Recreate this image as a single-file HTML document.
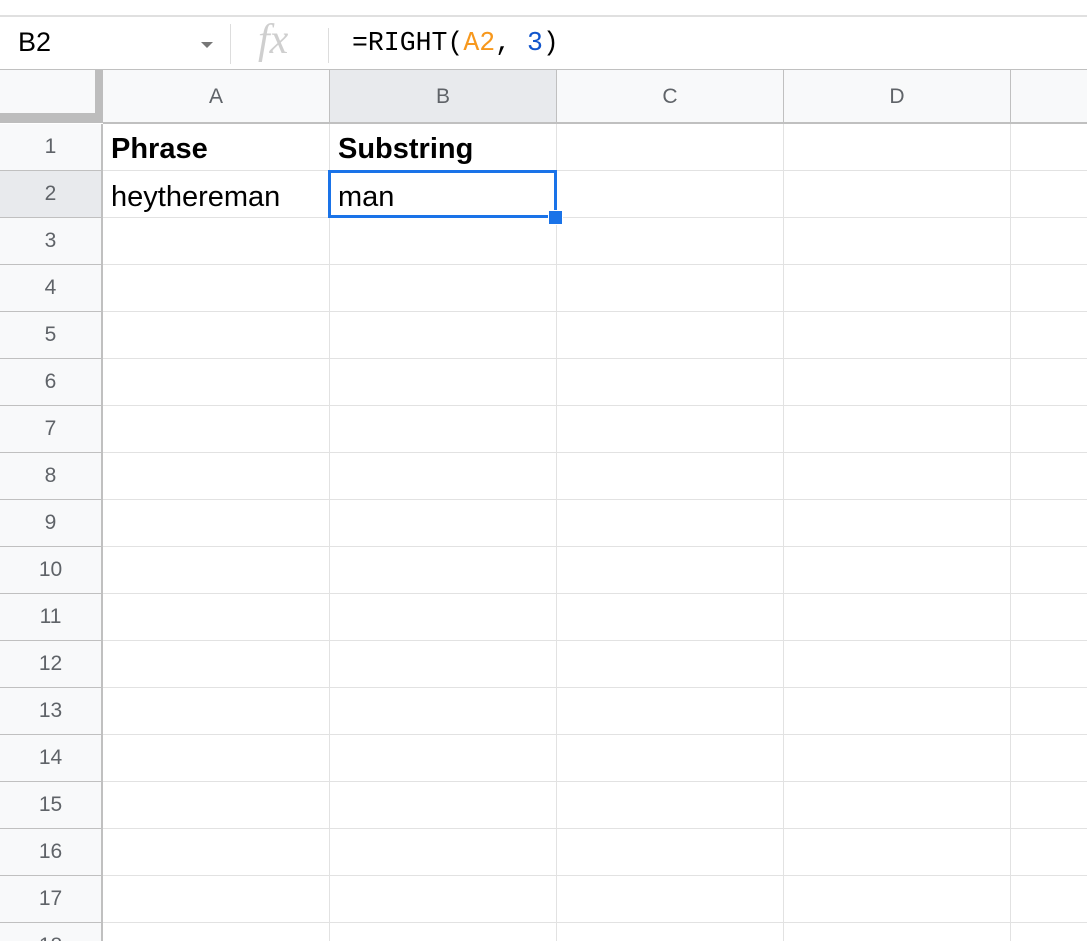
<!DOCTYPE html>
<html><head><style>
html,body{margin:0;width:1087px;height:941px;overflow:hidden}
body{background:#fff;font-family:"Liberation Sans",Arial,sans-serif;position:relative}
.a{position:absolute}
.h{background:#f8f9fa}
.ch{position:absolute;top:70px;height:53px;line-height:53px;text-align:center;color:#5f6368;font-size:21px;background:#f8f9fa;border-right:1px solid #c0c0c0}
.rh{position:absolute;left:0;width:103px;text-align:center;color:#5f6368;font-size:21px;background:#f8f9fa;border-bottom:1px solid #c0c0c0;border-right:2px solid #c0c0c0;box-sizing:border-box}
.hl{position:absolute;left:103px;right:0;height:1px;background:#e2e2e2}
.vl{position:absolute;top:124px;bottom:0;width:1px;background:#e2e2e2}
.t{position:absolute;font-size:29px;color:#000}
</style></head><body>
<div class="a" style="left:0;right:0;top:15px;height:2px;background:#e0e0e0"></div>
<div class="a" style="left:18px;top:27px;font-size:27px;color:#000">B2</div>
<div class="a" style="left:201px;top:42px;width:0;height:0;border-left:6px solid transparent;border-right:6px solid transparent;border-top:6px solid #777"></div>
<div class="a" style="left:230px;top:24px;width:1px;height:40px;background:#ddd"></div>
<div class="a" style="left:258px;top:16px;font-family:'Liberation Serif',serif;font-style:italic;font-size:42px;color:#cfcfcf">fx</div>
<div class="a" style="left:328px;top:28px;width:1px;height:35px;background:#ddd"></div>
<div class="a" style="left:352px;top:28px;font-family:'Liberation Mono',monospace;font-size:26.5px;color:#000">=RIGHT(<span style="color:#f7981d">A2</span>, <span style="color:#1155cc">3</span>)</div>
<div class="a" style="left:0;right:0;top:69px;height:1px;background:#c0c0c0"></div>
<div class="a h" style="left:0;top:70px;width:103px;height:53px"></div>
<div class="a" style="left:95px;top:70px;width:8px;height:53px;background:#bdbdbd"></div>
<div class="a" style="left:0;top:113px;width:103px;height:10px;background:#bdbdbd"></div>
<div class="ch" style="left:103px;width:226px">A</div>
<div class="ch" style="left:330px;width:226px;background:#e8eaed">B</div>
<div class="ch" style="left:557px;width:226px">C</div>
<div class="ch" style="left:784px;width:226px">D</div>
<div class="ch" style="left:1011px;width:80px"></div>
<div class="a" style="left:103px;right:0;top:122px;height:2px;background:#c0c0c0"></div>
<div class="rh" style="top:124px;height:47px;line-height:46px">1</div>
<div class="rh" style="top:171px;height:47px;line-height:46px;background:#e8eaed">2</div>
<div class="rh" style="top:218px;height:47px;line-height:46px">3</div>
<div class="rh" style="top:265px;height:47px;line-height:46px">4</div>
<div class="rh" style="top:312px;height:47px;line-height:46px">5</div>
<div class="rh" style="top:359px;height:47px;line-height:46px">6</div>
<div class="rh" style="top:406px;height:47px;line-height:46px">7</div>
<div class="rh" style="top:453px;height:47px;line-height:46px">8</div>
<div class="rh" style="top:500px;height:47px;line-height:46px">9</div>
<div class="rh" style="top:547px;height:47px;line-height:46px">10</div>
<div class="rh" style="top:594px;height:47px;line-height:46px">11</div>
<div class="rh" style="top:641px;height:47px;line-height:46px">12</div>
<div class="rh" style="top:688px;height:47px;line-height:46px">13</div>
<div class="rh" style="top:735px;height:47px;line-height:46px">14</div>
<div class="rh" style="top:782px;height:47px;line-height:46px">15</div>
<div class="rh" style="top:829px;height:47px;line-height:46px">16</div>
<div class="rh" style="top:876px;height:47px;line-height:46px">17</div>
<div class="rh" style="top:923px;height:47px;line-height:46px">18</div>
<div class="hl" style="top:170px"></div><div class="hl" style="top:217px"></div><div class="hl" style="top:264px"></div><div class="hl" style="top:311px"></div><div class="hl" style="top:358px"></div><div class="hl" style="top:405px"></div><div class="hl" style="top:452px"></div><div class="hl" style="top:499px"></div><div class="hl" style="top:546px"></div><div class="hl" style="top:593px"></div><div class="hl" style="top:640px"></div><div class="hl" style="top:687px"></div><div class="hl" style="top:734px"></div><div class="hl" style="top:781px"></div><div class="hl" style="top:828px"></div><div class="hl" style="top:875px"></div><div class="hl" style="top:922px"></div>
<div class="vl" style="left:329px"></div><div class="vl" style="left:556px"></div><div class="vl" style="left:783px"></div><div class="vl" style="left:1010px"></div>
<div class="t" style="left:111px;top:133px;font-weight:bold">Phrase</div>
<div class="t" style="left:338px;top:133px;font-weight:bold">Substring</div>
<div class="t" style="left:111px;top:181px">heythereman</div>
<div class="t" style="left:338px;top:181px">man</div>
<div class="a" style="left:328px;top:170px;width:223px;height:42px;border:3px solid #1a73e8"></div>
<div class="a" style="left:548px;top:210px;width:13px;height:13px;background:#1a73e8;border:1px solid #fff"></div>
</body></html>
